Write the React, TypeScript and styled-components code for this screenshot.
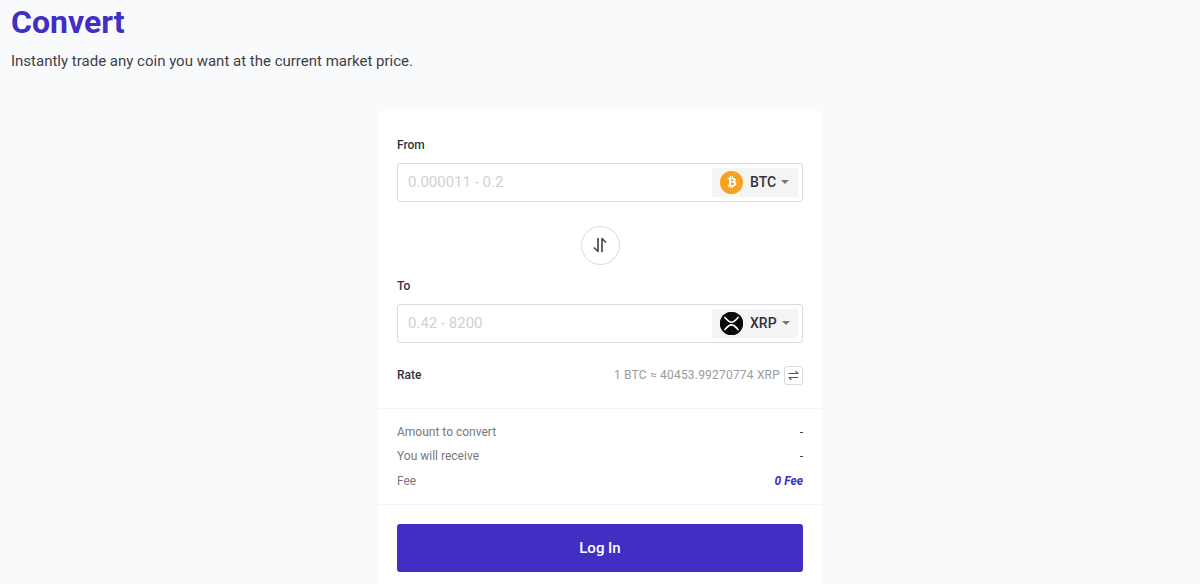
import React from "react";
import styled, { createGlobalStyle } from "styled-components";
import { FaBtc } from "react-icons/fa";

const GlobalStyle = createGlobalStyle`
  html, body {
    margin: 0;
    height: 584px;
    overflow: hidden;
    background: #f9fafc;
    font-family: Roboto, "Liberation Sans", sans-serif;
  }
`;

const Page = styled.div`
  display: flex;
  flex-direction: column;
  height: 584px;
  overflow: hidden;
`;

const Header = styled.header`
  padding: 0 11px;
  height: 111px;
  box-sizing: border-box;
`;

const Title = styled.h1`
  margin: 0;
  font-size: 32px;
  line-height: 44px;
  font-weight: 700;
  color: #412fc4;
`;

const Subtitle = styled.p`
  margin: 7px 0 0;
  font-size: 15px;
  line-height: 20px;
  color: #3f3f46;
`;

const Card = styled.main`
  align-self: center;
  width: 444px;
  flex: none;
  background: #fff;
  border-radius: 4px;
`;

const Section = styled.section`
  padding: 0 19px;
`;

const ExchangeSection = styled(Section)`
  padding-top: 26px;
  padding-bottom: 23px;
  border-bottom: 1px solid #f2f3f5;
`;

const FieldLabel = styled.label`
  display: block;
  font-size: 12px;
  line-height: 16px;
  font-weight: 500;
  color: #33333b;
  margin-bottom: 10px;
`;

const Field = styled.div`
  display: flex;
  align-items: center;
  justify-content: space-between;
  height: 39px;
  box-sizing: border-box;
  padding: 0 4px 0 10px;
  border: 1px solid #d9dadd;
  border-radius: 3px;
`;

const Placeholder = styled.span`
  font-size: 15px;
  color: #cfd0d4;
`;

const CoinSelect = styled.div`
  display: flex;
  align-items: center;
  width: 86px;
  height: 29px;
  box-sizing: border-box;
  padding-left: 8px;
  background: #f4f4f5;
  font-size: 14px;
  font-weight: 500;
  color: #33333b;
`;

const CoinBadge = styled.span<{ $bg: string }>`
  display: flex;
  align-items: center;
  justify-content: center;
  width: 23px;
  height: 23px;
  border-radius: 50%;
  background: ${(p) => p.$bg};
  color: #fff;
  margin-right: 7px;
`;

const Caret = styled.span`
  width: 0;
  height: 0;
  margin-left: 5px;
  border-left: 4px solid transparent;
  border-right: 4px solid transparent;
  border-top: 4px solid #77787e;
`;

const SwapRow = styled.div`
  display: flex;
  justify-content: center;
  margin: 24px 0 13px;
`;

const SwapButton = styled.button`
  display: flex;
  align-items: center;
  justify-content: center;
  width: 39px;
  height: 39px;
  padding: 0;
  background: #fff;
  border: 1px solid #d9dadd;
  border-radius: 50%;
  color: #4a4b52;
`;

const RateRow = styled.div`
  display: flex;
  align-items: center;
  justify-content: space-between;
  margin-top: 23px;
`;

const RateLabel = styled.span`
  font-size: 12px;
  font-weight: 500;
  color: #33333b;
`;

const RateValue = styled.div`
  display: flex;
  align-items: center;
  gap: 4px;
  font-size: 12px;
  letter-spacing: 0.2px;
  color: #9a9ba1;
`;

const RateToggle = styled.span`
  display: flex;
  align-items: center;
  justify-content: center;
  width: 19px;
  height: 19px;
  box-sizing: border-box;
  border: 1px solid #d9dadd;
  border-radius: 3px;
  color: #55565c;
`;

const SummarySection = styled(Section)`
  display: flex;
  flex-direction: column;
  padding-top: 11px;
  padding-bottom: 11px;
  border-bottom: 1px solid #f2f3f5;
`;

const SummaryRow = styled.div`
  display: flex;
  align-items: center;
  justify-content: space-between;
  height: 24.5px;
  font-size: 12px;
  color: #77787e;
`;

const SummaryValue = styled.span`
  color: #33333b;
`;

const FeeValue = styled.span`
  font-weight: 700;
  font-style: italic;
  color: #412fc4;
`;

const ActionSection = styled(Section)`
  padding-top: 19px;
  padding-bottom: 12px;
`;

const LoginButton = styled.button`
  display: block;
  width: 100%;
  height: 48px;
  border: 0;
  border-radius: 3px;
  background: #412fc4;
  color: #fff;
  font-family: inherit;
  font-size: 15px;
  font-weight: 500;
`;

function XrpIcon() {
  return (
    <svg width="23" height="23" viewBox="0 0 23 23" fill="none">
      <circle cx="11.5" cy="11.5" r="11.5" fill="#0a0a0a" />
      <path
        d="M5 5.5c2 2.2 3.6 4.6 6.5 4.6S16 7.700 18 5.500M5 17.500c2-2.200 3.600-4.600 6.500-4.600S16 15.300 18 17.500"
        stroke="#fff"
        strokeWidth="1.700"
        strokeLinecap="round"
      />
    </svg>
  );
}

function SwapIcon() {
  return (
    <svg width="16" height="16" viewBox="0 0 16 16" fill="none" stroke="currentColor" strokeWidth="1.700" strokeLinecap="round" strokeLinejoin="round">
      <path d="M6 1.500V14.500L2.500 11" />
      <path d="M10 14.500V1.500L13.500 5" />
    </svg>
  );
}

function RateIcon() {
  return (
    <svg width="11" height="11" viewBox="0 0 11 11" fill="none" stroke="currentColor" strokeWidth="1.100" strokeLinecap="round" strokeLinejoin="round">
      <path d="M1 3.500H10L7.800 1.300" />
      <path d="M10 7.500H1L3.200 9.700" />
    </svg>
  );
}

export default function App() {
  return (
    <>
      <GlobalStyle />
      <Page>
        <Header>
          <Title>Convert</Title>
          <Subtitle>Instantly trade any coin you want at the current market price.</Subtitle>
        </Header>
        <Card>
          <ExchangeSection>
            <FieldLabel>From</FieldLabel>
            <Field>
              <Placeholder>0.000011 - 0.2</Placeholder>
              <CoinSelect>
                <CoinBadge $bg="#f7a11f">
                  <FaBtc size={12} />
                </CoinBadge>
                BTC
                <Caret />
              </CoinSelect>
            </Field>
            <SwapRow>
              <SwapButton aria-label="Swap">
                <SwapIcon />
              </SwapButton>
            </SwapRow>
            <FieldLabel>To</FieldLabel>
            <Field>
              <Placeholder>0.42 - 8200</Placeholder>
              <CoinSelect>
                <CoinBadge $bg="#0a0a0a">
                  <XrpIcon />
                </CoinBadge>
                XRP
                <Caret />
              </CoinSelect>
            </Field>
            <RateRow>
              <RateLabel>Rate</RateLabel>
              <RateValue>
                1 BTC ≈ 40453.99270774 XRP
                <RateToggle>
                  <RateIcon />
                </RateToggle>
              </RateValue>
            </RateRow>
          </ExchangeSection>
          <SummarySection>
            <SummaryRow>
              Amount to convert
              <SummaryValue>-</SummaryValue>
            </SummaryRow>
            <SummaryRow>
              You will receive
              <SummaryValue>-</SummaryValue>
            </SummaryRow>
            <SummaryRow>
              Fee
              <FeeValue>0 Fee</FeeValue>
            </SummaryRow>
          </SummarySection>
          <ActionSection>
            <LoginButton>Log In</LoginButton>
          </ActionSection>
        </Card>
      </Page>
    </>
  );
}
